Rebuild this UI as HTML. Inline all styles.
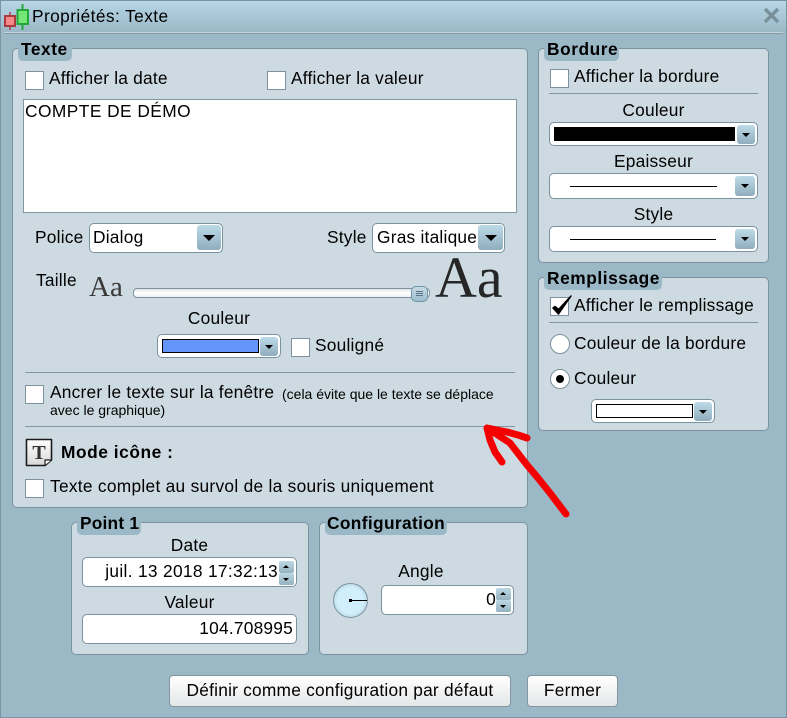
<!DOCTYPE html>
<html lang="fr"><head><meta charset="utf-8"><title>Propriétés: Texte</title>
<style>
html,body{margin:0;padding:0}
body{width:787px;height:718px;overflow:hidden;position:relative;background:#9bb8c6;font-family:"Liberation Sans",sans-serif;color:#000}
div,svg{position:absolute;box-sizing:border-box}
.t{font-size:17.33px;letter-spacing:.22px;line-height:20px;height:20px;white-space:nowrap;margin-top:-1px}
.c{text-align:center}
.b{font-weight:bold;letter-spacing:.55px}
.p{background:#cddae1;border:1px solid #7b939f;border-radius:5px}
.l{background:#9bb8c6;border-radius:0 0 5px 5px;height:18px}
.k{width:19px;height:19px;background:#fff;border:1px solid #7d929c}
.f{background:#fff;border:1px solid #7b939f;border-radius:5px}
.s{height:1px;background:#7f97a3}
.a{background:linear-gradient(#bcdae8,#8fadbc);border-radius:3px}
.a:after{content:"";position:absolute;left:50%;top:50%;margin:-2px 0 0 -4px;border:4px solid transparent;border-top:4px solid #000;border-bottom:0}
.a.big:after{margin:-3px 0 0 -6px;border:6px solid transparent;border-top:6px solid #000;border-bottom:0}
.u,.d{background:linear-gradient(#bcd8e5,#95b2c0);border-radius:2px;left:0;width:15px;height:12px}
.u:after{content:"";position:absolute;left:4px;top:4px;border:3.5px solid transparent;border-bottom:3px solid #000;border-top:0}
.d:after{content:"";position:absolute;left:4px;top:5px;border:3.5px solid transparent;border-top:3px solid #000;border-bottom:0}
.sw{background:#fff;border:1px solid #000}
.ln{height:1px;background:#000}
.r{width:20px;height:20px;border-radius:50%;background:#fff;border:1px solid #7d929c}
.bt{background:linear-gradient(#fff,#e4e6e7);border:1px solid #82979f;border-radius:4px;text-align:center;font-size:17.33px;letter-spacing:.22px;line-height:29px}
</style></head><body>

<div style="left:0;top:0;width:787px;height:33px;background:linear-gradient(#b8d7e6,#9ab7c6)"></div>
<div style="left:0;top:0;width:787px;height:718px;border:1px solid #7c949f"></div>
<div style="left:4px;top:32px;width:779px;height:1px;background:#c5d5dc"></div>
<div style="left:4px;top:33px;width:779px;height:1px;background:#7f9aa8"></div>

<svg style="left:3px;top:3px" width="28" height="28" viewBox="0 0 28 28">
<path d="M7 9V27" stroke="#b33f46" stroke-width="1.500"/>
<rect x="2" y="13" width="10" height="10" fill="#f58a8a" stroke="#a83a40" stroke-width="2"/>
<path d="M19.500 1V27" stroke="#22a83a" stroke-width="2"/>
<rect x="14.500" y="7" width="10.500" height="14" fill="#74e674" stroke="#22a83a" stroke-width="2"/>
</svg>
<div class="t" style="left:32px;top:7px;letter-spacing:.4px">Propriétés: Texte</div>
<svg style="left:763px;top:7px" width="17" height="17" viewBox="0 0 17 17"><path d="M2 2L15 15M15 2L2 15" stroke="#77909a" stroke-width="3.400"/></svg>

<!-- Texte -->
<div class="p" style="left:12px;top:48px;width:516px;height:460px"></div>
<div class="l" style="left:18px;top:43px;width:54px"></div>
<div class="t b" style="left:21px;top:40px">Texte</div>
<div class="k" style="left:25px;top:71px"></div>
<div class="t" style="left:49px;top:69px">Afficher la date</div>
<div class="k" style="left:267px;top:71px"></div>
<div class="t" style="left:291px;top:69px">Afficher la valeur</div>
<div style="left:23px;top:99px;width:494px;height:114px;background:#fff;border:1px solid #7f97a3"></div>
<div class="t" style="left:25px;top:102px;letter-spacing:.45px">COMPTE DE DÉMO</div>

<div class="t" style="left:35px;top:228px">Police</div>
<div class="f" style="left:89px;top:223px;width:134px;height:30px"></div>
<div class="t" style="left:93px;top:228px">Dialog</div>
<div class="a big" style="left:197px;top:225px;width:24px;height:25px"></div>

<div class="t" style="left:327px;top:228px">Style</div>
<div class="f" style="left:372px;top:223px;width:133px;height:30px"></div>
<div class="t" style="left:377px;top:228px">Gras italique</div>
<div class="a big" style="left:478px;top:225px;width:25px;height:25px"></div>

<div class="t" style="left:36px;top:271px">Taille</div>
<div style="left:89px;top:270px;font:29px/34px 'Liberation Serif',serif;color:#3a3a3a;white-space:nowrap">Aa</div>
<div style="left:133px;top:288px;width:297px;height:10px;background:linear-gradient(#e2e4e5,#fff 50%,#eee);border:1px solid #7b939f;border-radius:4px"></div>
<div style="left:411px;top:286px;width:17px;height:16px;background:linear-gradient(#c7dbe5,#9dbccb);border:1px solid #6f96ab;border-radius:5px"></div>
<div style="left:416px;top:291px;width:7px;height:1px;background:#5a7686"></div>
<div style="left:416px;top:293px;width:7px;height:1px;background:#5a7686"></div>
<div style="left:416px;top:295px;width:7px;height:1px;background:#5a7686"></div>
<div style="left:435px;top:244px;font:58px/68px 'Liberation Serif',serif;color:#262626;white-space:nowrap">Aa</div>

<div class="t c" style="left:158px;top:309px;width:122px">Couleur</div>
<div class="f" style="left:157px;top:334px;width:124px;height:24px"></div>
<div class="sw" style="left:162px;top:339px;width:97px;height:14px;background:#6495fb"></div>
<div class="a" style="left:260px;top:337px;width:18px;height:19px"></div>
<div class="k" style="left:291px;top:338px"></div>
<div class="t" style="left:315px;top:336px">Souligné</div>

<div class="s" style="left:25px;top:372px;width:490px"></div>
<div class="k" style="left:25px;top:385px"></div>
<div class="t" style="left:50px;top:383px">Ancrer le texte sur la fenêtre</div>
<div class="t" style="left:282px;top:384px;font-size:14px;letter-spacing:0;margin-top:0">(cela évite que le texte se déplace</div>
<div class="t" style="left:50px;top:400px;font-size:14px;letter-spacing:0;margin-top:0">avec le graphique)</div>
<div class="s" style="left:25px;top:426px;width:490px"></div>

<svg style="left:24px;top:438px" width="30" height="29" viewBox="0 0 30 29">
<defs><linearGradient id="g" x1="0" y1="0" x2="0" y2="1"><stop offset="0" stop-color="#fff"/><stop offset="1" stop-color="#d8d8d8"/></linearGradient></defs>
<path d="M2.500 1.500H27.500V22L21 27.500H2.500Z" fill="url(#g)" stroke="#1a1a1a" stroke-width="1.600" stroke-linejoin="round"/>
<path d="M21 27V22H27.500" fill="#fff" stroke="#1a1a1a" stroke-width="1.200"/>
<text x="15" y="21" text-anchor="middle" font-family="Liberation Serif,serif" font-weight="bold" font-size="20" fill="#333">T</text>
</svg>
<div class="t b" style="left:61px;top:443px">Mode icône :</div>
<div class="k" style="left:25px;top:479px"></div>
<div class="t" style="left:50px;top:477px;letter-spacing:.28px">Texte complet au survol de la souris uniquement</div>

<!-- Bordure -->
<div class="p" style="left:538px;top:48px;width:231px;height:215px"></div>
<div class="l" style="left:544px;top:43px;width:75px"></div>
<div class="t b" style="left:547px;top:40px">Bordure</div>
<div class="k" style="left:550px;top:69px"></div>
<div class="t" style="left:574px;top:67px">Afficher la bordure</div>
<div class="s" style="left:549px;top:93px;width:209px"></div>
<div class="t c" style="left:549px;top:101px;width:209px">Couleur</div>
<div class="f" style="left:549px;top:122px;width:209px;height:24px"></div>
<div style="left:554px;top:127px;width:181px;height:14px;background:#000"></div>
<div class="a" style="left:737px;top:125px;width:18px;height:19px"></div>
<div class="t c" style="left:549px;top:152px;width:209px">Epaisseur</div>
<div class="f" style="left:549px;top:173px;width:209px;height:26px"></div>
<div class="ln" style="left:570px;top:186px;width:147px"></div>
<div class="a" style="left:735px;top:176px;width:20px;height:20px"></div>
<div class="t c" style="left:549px;top:205px;width:209px">Style</div>
<div class="f" style="left:549px;top:226px;width:209px;height:26px"></div>
<div class="ln" style="left:570px;top:239px;width:146px"></div>
<div class="a" style="left:735px;top:229px;width:20px;height:20px"></div>

<!-- Remplissage -->
<div class="p" style="left:538px;top:277px;width:231px;height:154px"></div>
<div class="l" style="left:544px;top:272px;width:118px"></div>
<div class="t b" style="left:547px;top:269px">Remplissage</div>
<div class="k" style="left:550px;top:297px"></div>
<svg style="left:550px;top:293px" width="23" height="25" viewBox="0 0 23 25"><path d="M3 15L8.500 21L21 3L8.500 16.500L5 13.500Z" fill="#000" stroke="#000" stroke-width="1.500" stroke-linejoin="round"/></svg>
<div class="t" style="left:574px;top:296px">Afficher le remplissage</div>
<div class="s" style="left:549px;top:322px;width:209px"></div>
<div class="r" style="left:550px;top:334px"></div>
<div class="t" style="left:574px;top:334px">Couleur de la bordure</div>
<div class="r" style="left:550px;top:369px"></div>
<div style="left:556px;top:375px;width:8px;height:8px;border-radius:50%;background:#000"></div>
<div class="t" style="left:574px;top:369px">Couleur</div>
<div class="f" style="left:591px;top:399px;width:124px;height:24px"></div>
<div class="sw" style="left:596px;top:404px;width:97px;height:14px"></div>
<div class="a" style="left:694px;top:402px;width:18px;height:19px"></div>

<!-- Point 1 -->
<div class="p" style="left:71px;top:522px;width:238px;height:133px"></div>
<div class="l" style="left:77px;top:517px;width:64px"></div>
<div class="t b" style="left:80px;top:514px;letter-spacing:.2px">Point 1</div>
<div class="t c" style="left:82px;top:536px;width:215px">Date</div>
<div class="f" style="left:82px;top:557px;width:215px;height:30px"></div>
<div class="t" style="right:509px;top:562px;letter-spacing:.32px">juil. 13 2018 17:32:13</div>
<div style="left:279px;top:561px;width:15px;height:24px"><div class="u" style="top:0"></div><div class="d" style="top:12px"></div></div>
<div class="t c" style="left:82px;top:593px;width:215px">Valeur</div>
<div class="f" style="left:82px;top:614px;width:215px;height:30px"></div>
<div class="t" style="right:494px;top:619px">104.708995</div>

<!-- Configuration -->
<div class="p" style="left:319px;top:522px;width:209px;height:133px"></div>
<div class="l" style="left:325px;top:517px;width:122px"></div>
<div class="t b" style="left:327px;top:514px;letter-spacing:.35px">Configuration</div>
<div class="t c" style="left:381px;top:562px;width:80px">Angle</div>
<div style="left:333px;top:583px;width:35px;height:35px;border-radius:50%;border:1px solid #7d959f;background:radial-gradient(circle,#d0eefc 55%,#a5c0cd)"></div>
<div style="left:349px;top:600px;width:18px;height:1px;background:#000"></div>
<div style="left:349px;top:599px;width:3px;height:3px;background:#000"></div>
<div class="f" style="left:381px;top:585px;width:133px;height:30px"></div>
<div class="t" style="right:291px;top:590px">0</div>
<div style="left:496px;top:588px;width:15px;height:24px"><div class="u" style="top:0"></div><div class="d" style="top:12px"></div></div>

<!-- Buttons -->
<div class="bt" style="left:169px;top:675px;width:342px;height:32px">Définir comme configuration par défaut</div>
<div class="bt" style="left:527px;top:675px;width:91px;height:32px">Fermer</div>

<!-- Red arrow -->
<svg style="left:0;top:0" width="787" height="718" viewBox="0 0 787 718" fill="none">
<path d="M566 514L550 493L538 478L527 465L510 443L487 428L490 440L495 452L502 462M487 428L507 432L518 435L527 438" stroke="#f40000" stroke-width="7" stroke-linecap="round" stroke-linejoin="round"/>
</svg>
</body></html>
